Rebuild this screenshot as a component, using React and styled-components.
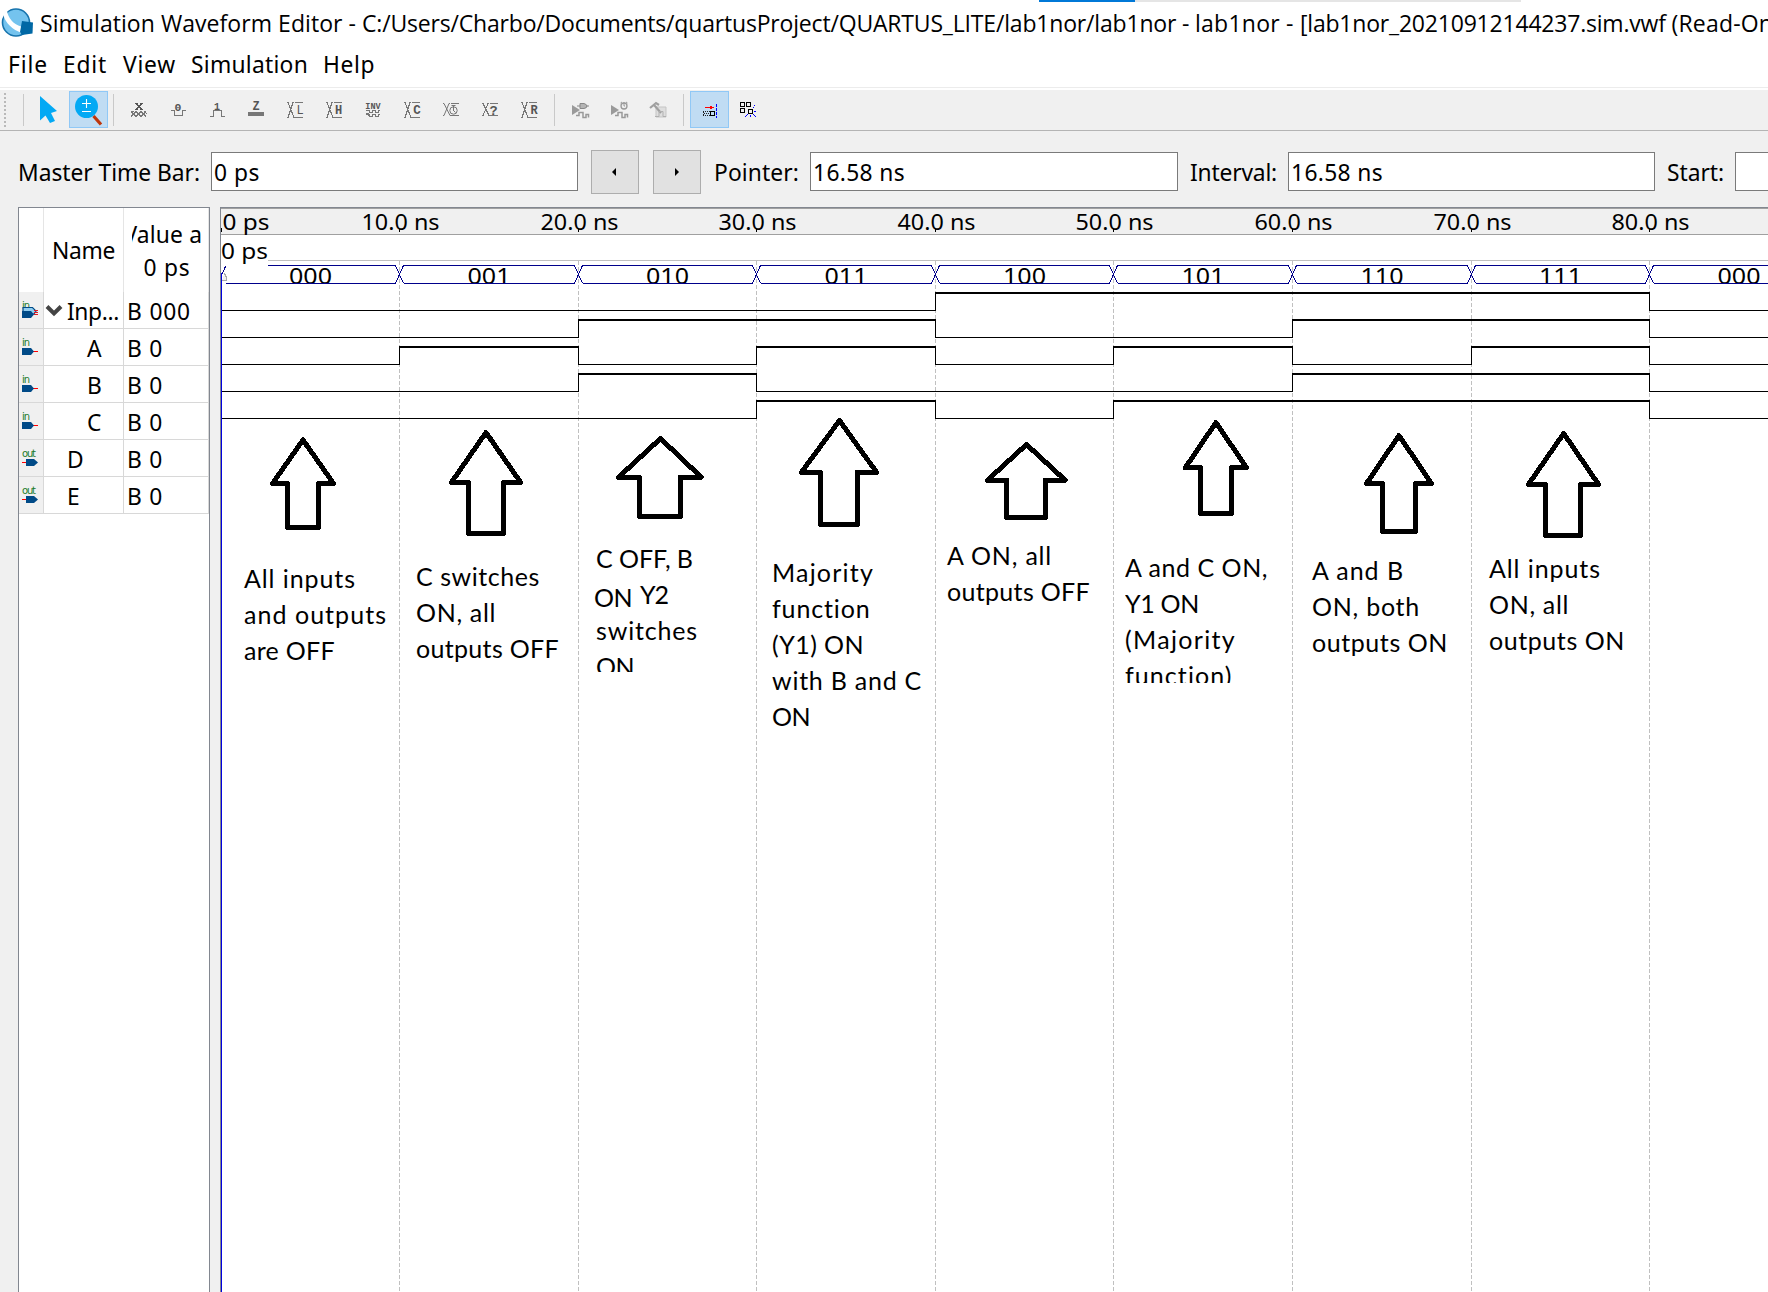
import React, { useLayoutEffect, useRef, useState } from 'react';
import styled, { createGlobalStyle } from 'styled-components';

const GlobalStyle = createGlobalStyle`
  * { box-sizing: border-box; }
  html, body, #root { margin: 0; padding: 0; height: 100%; }
  body { background: #f0f0f0; overflow: hidden; }
`;

const UI_FONT = '"Noto Sans", "Open Sans", sans-serif';

/* ---------- text set to a given measure ---------- */

const Run = styled.span`
  display: inline-block;
  justify-self: start;
  white-space: pre;
`;

function Fit({ width, children }) {
  const ref = useRef(null);
  const [spacing, setSpacing] = useState(0);
  useLayoutEffect(() => {
    const el = ref.current;
    el.style.letterSpacing = '0px';
    const natural = el.getBoundingClientRect().width;
    setSpacing((width - natural) / String(children).length);
    el.style.letterSpacing = `${(width - natural) / String(children).length}px`;
  }, [width, children]);
  return (
    <Run ref={ref} style={{ letterSpacing: `${spacing}px` }}>
      {children}
    </Run>
  );
}

/* ---------- window frame ---------- */

const Window = styled.div`
  width: 1768px;
  height: 1292px;
  display: flex;
  flex-direction: column;
  overflow: hidden;
  background: #f0f0f0;
  color: #000;
  font-family: ${UI_FONT};
  font-size: 22.8px;
`;

const TopStrip = styled.div`
  height: 2px;
  flex: none;
  display: flex;
  padding-left: 1039px;
  background: #fff;
`;
const StripPart = styled.div`
  width: ${(p) => p.$w}px;
  background: ${(p) => p.$color};
`;

const TitleBar = styled.header`
  height: 44px;
  flex: none;
  display: flex;
  align-items: center;
  padding: 0 0 1px 1px;
  background: #fff;
  white-space: pre;
  line-height: 43px;
  font-family: "Open Sans", "Noto Sans", sans-serif;
  font-size: 23px;
`;
const Logo = styled.svg`
  width: 34px;
  height: 32px;
  flex: none;
  margin-right: 5px;
`;

const MenuBar = styled.nav`
  height: 44px;
  flex: none;
  display: grid;
  grid-template-columns: 55px 60px 68px 132px 60px;
  padding-left: 8px;
  background: #fff;
  border-bottom: 2px solid #fff;
  box-shadow: inset 0 -1px #ececec;
  line-height: 37px;
`;

/* ---------- tool bar ---------- */

const ToolBar = styled.div`
  height: 41px;
  flex: none;
  display: flex;
  align-items: flex-start;
  padding: 1px 0 0 4px;
  border-bottom: 1px solid #b4b4b4;
`;
const Grip = styled.div`
  width: 2px;
  height: 34px;
  margin: 2px 17px 0 0;
  background: repeating-linear-gradient(#b9b9b9 0 2px, transparent 2px 4px);
`;
const Divider = styled.div`
  width: 1px;
  height: 32px;
  margin: 3px ${(p) => p.$after}px 0 ${(p) => p.$before || 0}px;
  background: #c9c9c9;
`;
const ToolButton = styled.button`
  width: 39px;
  height: 37px;
  margin: 0 ${(p) => p.$after || 0}px 0 0;
  padding: 0;
  display: block;
  border: 1px solid ${(p) => (p.$on ? '#90c8f6' : 'transparent')};
  background: ${(p) => (p.$on ? '#c0dcf3' : 'transparent')};
`;
const Glyph = styled.svg`
  display: block;
  width: 39px;
  height: 37px;
  margin: -1px;
  overflow: visible;
`;

const G = '#777';
const letterProps = {
  fill: '#555',
  fontFamily: '"Liberation Mono", monospace',
  fontWeight: 700,
  textAnchor: 'middle',
};

function CrossFrame({ small }) {
  const b = small ? 24.5 : 26.5;
  const t = small ? 12.5 : 11.5;
  return (
    <path
      d={`M12 ${t}h1l6 ${b - t}h1M19 ${t}h-1l-5 ${b - t}h-1M20 ${t}h8M20 ${b}h8`}
      stroke={G}
      fill="none"
    />
  );
}

const icons = {
  pointer: <path d="M13 5V29.500L18.500 24.500L23 32L28 30L24 22L30 20Z" fill="#03a9f4" />,
  zoom: (
    <>
      <path d="M24.500 25L32 33.500" stroke="#bf360c" strokeWidth="3.200" />
      <circle cx="17.500" cy="15.500" r="11.500" fill="#03a9f4" />
      <path d="M13 12.500h9M17.500 8v9M13 20.500h9" stroke="#fff" strokeWidth="1.100" />
    </>
  ),
  x: (
    <>
      <path d="M16 12.500h3M21 12.500h3M16 18.500h3M21 18.500h3M17.500 12.500L22.500 18.500M22.500 12.500L17.500 18.500" stroke="#555" strokeWidth="1.500" fill="none" />
      <path d="M12 20.500l5 5l5 -5l5 5M12 25.500l5 -5l5 5l5 -5M14.500 20l-2 2M25 20l3 3" stroke={G} fill="none" />
    </>
  ),
  zero: (
    <>
      <text x="20" y="20" fontSize="11.500" {...letterProps}>0</text>
      <path d="M13 19.500h3.500v5h8v-5H28" stroke={G} fill="none" />
    </>
  ),
  one: (
    <>
      <text x="20" y="18.500" fontSize="10" {...letterProps}>1</text>
      <path d="M13 25.500h3.500v-6h7.500v6h3.500" stroke={G} fill="none" />
    </>
  ),
  z: (
    <>
      <text x="20" y="19" fontSize="12" {...letterProps}>Z</text>
      <path d="M12 21h16v4H12z" fill={G} />
    </>
  ),
  l: <><CrossFrame /><text x="25" y="22.500" fontSize="12" {...letterProps} fontWeight="400">L</text></>,
  h: <><CrossFrame /><text x="24.500" y="22.500" fontSize="12" {...letterProps}>H</text></>,
  inv: (
    <>
      <text x="20" y="18" fontSize="8.500" {...letterProps}>INV</text>
      <path
        d="M13 19.500h3v2h3v-2h3v2h3v-2h2M13 22.500h2v2M13 23.500h3v2h3v-2h3v2h3v-2h2"
        stroke={G}
        fill="none"
      />
    </>
  ),
  c: <><CrossFrame /><text x="25" y="23" fontSize="12.500" {...letterProps}>C</text></>,
  clock: (
    <>
      <CrossFrame small />
      <circle cx="22.500" cy="19.500" r="3.700" fill="none" stroke={G} />
      <path d="M22.500 14v6M20.500 14.500h4M22.500 19.500l2 2" stroke={G} fill="none" />
    </>
  ),
  question: <><CrossFrame small /><text x="23.500" y="23.500" fontSize="13.500" {...letterProps}>?</text></>,
  r: <><CrossFrame /><text x="25" y="22.500" fontSize="12" {...letterProps}>R</text></>,
  run: (
    <>
      <path d="M11 14L19 19L11 24Z" fill="#9a9a9a" />
      <path d="M19 12.500h4q3 1 3 2.500q0 2 -3 2.500h-4zM16 15h3M25 15h3" fill="#b5b5b5" stroke="#888" />
      <path d="M15 24.500h3v-3h4v5h3v-3h2.500v3" fill="none" stroke="#999" strokeWidth="1.500" />
    </>
  ),
  runTimed: (
    <>
      <path d="M11 14L19 19L11 24Z" fill="#9a9a9a" />
      <circle cx="24" cy="15" r="3" fill="#eee" stroke="#999" strokeWidth="1.300" />
      <path d="M24 11v4h1M20.500 12l1.500 -1M27.500 12l-1.500 -1" stroke="#999" fill="none" />
      <path d="M15 24.500h3v-3h4v5h3v-3h2.500v3" fill="none" stroke="#999" strokeWidth="1.500" />
    </>
  ),
  generate: (
    <>
      <path d="M17 16h10v10H17z" fill="#dedede" stroke="#c5c5c5" />
      <path d="M11 17L17 12L20 14M15.500 14.500L22 22" fill="none" stroke="#a0a0a0" strokeWidth="2.200" />
      <path d="M16 25.500h4v-5h4v5h3" fill="none" stroke="#b0b0b0" />
    </>
  ),
  snap: (
    <>
      <path d="M15 16.500h6" stroke="#f00" />
      <path d="M20 14.500v4l3.500 -2z" fill="#f00" />
      <path d="M13 20.500h7M14 22.500h6M13 24.500h7M13.500 21v4" stroke="#222" strokeDasharray="1 1" />
      <path d="M20.500 20.500h4v4h-4z" fill="none" stroke="#000" />
      <path d="M26.500 13v14" stroke="#00f" strokeDasharray="3 1" />
    </>
  ),
  grid: (
    <>
      <path d="M11.500 11.500h4v4h-4zM17.500 11.500h4v4h-4zM11.500 17.500h4v4h-4zM19.500 18.500h4v4h-4z" fill="none" stroke="#000" strokeWidth="1.300" />
      <path d="M24 17l2 -2.500M25 20.500h3M24.500 23.500l2.500 2.500M21.500 24v3M18.500 23.500l-2 2.500" stroke="#00f" strokeDasharray="2 .6" fill="none" />
    </>
  ),
};

function Tool({ name, on, smooth, after }) {
  return (
    <ToolButton $on={on} $after={after}>
      <Glyph viewBox="0 0 39 37" shapeRendering={smooth ? 'auto' : 'crispEdges'}>
        {icons[name]}
      </Glyph>
    </ToolButton>
  );
}

/* ---------- time bar ---------- */

const TimeBar = styled.div`
  height: 76px;
  flex: none;
  display: flex;
  align-items: flex-start;
  padding: 19px 0 0 18px;
  width: 2200px;
`;
const FieldLabel = styled.label`
  width: ${(p) => p.$w}px;
  flex: none;
  line-height: 45px;
  white-space: nowrap;
`;
const Field = styled.div`
  width: ${(p) => p.$w}px;
  height: 39px;
  flex: none;
  margin: 2px ${(p) => p.$after}px 0 0;
  padding-left: 2px;
  border: 1px solid #7a7a7a;
  background: #fff;
  line-height: 39px;
`;
const StepButton = styled.button`
  width: 48px;
  height: 44px;
  flex: none;
  margin: 0 ${(p) => p.$after}px 0 0;
  padding: 0 2px 0 0;
  display: flex;
  align-items: center;
  justify-content: center;
  border: 1px solid #adadad;
  background: #e1e1e1;
`;

/* ---------- signal table ---------- */

const Main = styled.main`
  flex: 1;
  min-height: 0;
  display: flex;
  gap: 10px;
  padding-left: 18px;
`;
const SignalPanel = styled.section`
  width: 192px;
  flex: none;
  border: 1px solid #828790;
  border-bottom: 0;
  background: #fff;
`;
const columns = '25px 80px 1fr';
const HeadRow = styled.div`
  height: 84px;
  display: grid;
  grid-template-columns: ${columns};
`;
const HeadCell = styled.div`
  border-right: 1px solid #e5e5e5;
  display: flex;
  flex-direction: column;
  align-items: center;
  justify-content: center;
  overflow: hidden;
  line-height: 33px;
  padding: ${(p) => p.$pad || '0'};
`;
const Clipped = styled.div`
  width: 70px;
  display: flex;
  justify-content: center;
  overflow: hidden;
`;
const SignalRow = styled.div`
  height: 37px;
  display: grid;
  grid-template-columns: ${columns};
`;
const Cell = styled.div`
  border-right: 1px solid #d8d8d8;
  border-bottom: 1px solid #d8d8d8;
  background: ${(p) => (p.$gutter ? '#f0f0f0' : '#fff')};
  padding-left: ${(p) => p.$indent || 0}px;
  line-height: 39px;
  display: flex;
  white-space: nowrap;
  overflow: hidden;
`;
const PinSvg = styled.svg`
  width: 23px;
  height: 36px;
  display: block;
`;
const Chevron = styled.svg`
  width: 18px;
  height: 36px;
  margin: 0 4px 0 1px;
  flex: none;
`;

function Pin({ kind }) {
  const out = kind === 'out';
  return (
    <PinSvg viewBox="0 0 23 36">
      <text x="3" y="17" fontSize="10" textLength={out ? 14 : 8} fill="#1b7a2b" fontFamily="DejaVu Sans, sans-serif">
        {out ? 'out' : 'in'}
      </text>
      {kind === 'bus' && (
        <>
          <path d="M4 15.500h9.500l3.500 3.500l-2 3H4z" fill="#8fcdf0" stroke="#004a87" strokeWidth="1.200" />
          <path d="M15 18.500h4M15 20.500h4M15 22.500h4" stroke="#e01b24" />
        </>
      )}
      {kind !== 'bus' && <path d={out ? 'M3 22.500h5' : 'M13 22.500h6'} stroke="#f00" />}
      <path d={out ? 'M7 19h8l4 3.500l-4 3.500H7z' : 'M3 19h9l3 3.500l-3 3.500H3z'} fill="#004a87" />
    </PinSvg>
  );
}

const signals = [
  { kind: 'bus', name: 'Inp...', w: 52, value: 'B 000', vw: 64 },
  { kind: 'in', name: 'A', indent: 43, w: 16, value: 'B 0', vw: 36 },
  { kind: 'in', name: 'B', indent: 43, w: 16, value: 'B 0', vw: 36 },
  { kind: 'in', name: 'C', indent: 43, w: 16, value: 'B 0', vw: 36 },
  { kind: 'out', name: 'D', indent: 23, w: 17, value: 'B 0', vw: 36 },
  { kind: 'out', name: 'E', indent: 23, w: 14, value: 'B 0', vw: 36 },
];

/* ---------- waveform canvas ---------- */

const WavePanel = styled.section`
  position: relative;
  flex: 1;
  min-width: 0;
  overflow: hidden;
  background: #fff;
`;
const WaveSvg = styled.svg`
  display: block;
  width: 1548px;
  height: 1085px;
  font-family: ${UI_FONT};
  font-size: 22.4px;
`;

const marks = [221, 399, 578, 756, 935, 1113, 1292, 1471, 1649, 1828];
const busValues = ['000', '001', '010', '011', '100', '101', '110', '111', '000'];
const traces = ['000011110', '001100110', '010101010', '001000110', '000101110'];

function tracePath(bits, low) {
  const top = low - 18;
  let d = '';
  let edge = '';
  bits.split('').forEach((bit, i) => {
    const a = marks[i];
    const b = marks[i + 1];
    if (bit === '1') d += `M${a} ${top}H${b + 1}v2H${a}z`;
    else d += `M${a} ${low}H${b + 1}v1H${a}z`;
    if (i > 0 && bits[i - 1] !== bit) edge += `M${a} ${top}h1V${low + 1}h-1z`;
  });
  return d + edge;
}

const arrows = [
  [303, 440, 272.5, 333.5, 483.5, 287.5, 318.5, 527.5],
  [486, 432.5, 451.5, 520.5, 482.3, 468.5, 503.5, 533.5],
  [660.5, 438.5, 618.5, 701.3, 477.3, 639.5, 680.3, 516.5],
  [839.5, 420.5, 801.4, 876.6, 472.3, 820.3, 857.3, 524.5],
  [1026.5, 444.5, 987.3, 1065.3, 480.3, 1006.6, 1045.4, 517.5],
  [1216, 422.5, 1185.3, 1246.5, 467.7, 1200.5, 1231.3, 513.5],
  [1399, 435.5, 1366.5, 1431.5, 483.5, 1382.5, 1415.5, 531.5],
  [1563.7, 433.5, 1528.5, 1598.5, 484.3, 1545.5, 1580.5, 535.5],
];

function Waveforms() {
  return (
    <WaveSvg viewBox="220 207 1548 1085" shapeRendering="crispEdges">
      <rect x="220" y="207" width="1548" height="27" fill="#f0f0f0" />
      <rect x="220" y="207" width="1548" height="1" fill="#828790" />
      <rect x="220" y="208" width="1548" height="1" fill="#a0a0a0" />
      <rect x="220" y="234" width="1548" height="1" fill="#a0a0a0" />
      <rect x="268" y="260" width="1500" height="1" fill="#c0c0c0" />
      <text x="222.500" y="230" textLength="47" lengthAdjust="spacingAndGlyphs">0 ps</text>
      <rect x="221" y="228" width="1" height="4" />
      {marks.slice(1, 9).map((m, i) => (
        <g key={m}>
          <text x={m - 37.5} y="230" textLength="78" lengthAdjust="spacingAndGlyphs">{`${i + 1}0.0 ns`}</text>
          <rect x={m} y="228" width="1" height="4" />
          <line x1={m + 0.5} x2={m + 0.5} y1="261" y2="1292" stroke="#c0c0c0" strokeDasharray="4 2" />
        </g>
      ))}
      <text x="221" y="259" textLength="47" lengthAdjust="spacingAndGlyphs">0 ps</text>

      {busValues.map((v, i) => (
        <text key={i} x={(marks[i] + marks[i + 1]) / 2 - 21} y="284" textLength="43" lengthAdjust="spacingAndGlyphs">{v}</text>
      ))}
      <rect x="222" y="284" width="1546" height="6" fill="#fff" />
      {marks.slice(1, 9).map((m) => (
        <line key={m} x1={m + 0.5} x2={m + 0.5} y1="285" y2="291" stroke="#c0c0c0" strokeDasharray="4 2" />
      ))}
      {busValues.map((v, i) => (
        <path
          key={i}
          d={`M${i ? marks[i] + 4.5 : 268} 265.500H${marks[i + 1] - 3.5}M${marks[i] + 4.5} 283.500H${marks[i + 1] - 3.5}`}
          stroke="#00008b"
        />
      ))}
      {marks.slice(1, 9).map((m) => (
        <path key={m} d={`M${m - 3.5} 265.500L${m + 4.5} 283.500M${m + 4.5} 265.500L${m - 3.5} 283.500`} stroke="#00008b" />
      ))}
      <path d="M221.500 275L225.500 266.500" stroke="#00008b" />
      <path d="M222 280.500h4v-4l-1.500 -3" stroke="#a9a9a9" fill="#f0f0f0" />

      {traces.map((bits, i) => (
        <path key={i} d={tracePath(bits, 310 + 27 * i)} fill="#000" />
      ))}
      <rect x="220" y="207" width="1" height="1085" fill="#828790" />
      <rect x="221" y="273" width="1" height="1019" fill="#0000e0" />
      {arrows.map(([tx, ty, l, r, wy, bl, br, by]) => (
        <path
          key={tx}
          d={`M${tx} ${ty}L${r} ${wy}H${br}V${by}H${bl}V${wy}H${l}Z`}
          fill="none"
          stroke="#000"
          strokeWidth="5"
          strokeLinejoin="round"
        />
      ))}
    </WaveSvg>
  );
}

/* Notes are pinned freely on the canvas; x and y are the first baseline. */
const Note = styled.div`
  position: absolute;
  left: ${(p) => p.$x - 220}px;
  top: ${(p) => p.$y - 28 - 207}px;
  ${(p) => (p.$clip ? `height: ${p.$clip}px; overflow: hidden;` : '')}
  font-family: Lato, "Noto Sans", sans-serif;
  font-size: 25px;
  line-height: 36px;
`;
const Line = styled.div`
  height: 36px;
  white-space: nowrap;
`;

const notes = [
  { x: 244, y: 588, lines: [['All inputs', 112], ['and outputs', 143], ['are OFF', 91]] },
  { x: 416, y: 586, lines: [['C switches', 124], ['ON, all', 80], ['outputs OFF', 143]] },
  { x: 596, y: 568, lines: [['C OFF, B', 97]] },
  { x: 594, y: 607, lines: [['ON', 38]] },
  { x: 640, y: 604, lines: [['Y2', 28]] },
  { x: 596, y: 640, clip: 60, lines: [['switches', 102], ['ON', 38]] },
  { x: 772, y: 582, lines: [['Majority', 102], ['function', 99], ['(Y1) ON', 92], ['with B and C', 150], ['ON', 38]] },
  { x: 947, y: 565, lines: [['A ON, all', 105], ['outputs OFF', 143]] },
  { x: 1125, y: 577, clip: 134, lines: [['A and C ON,', 143], ['Y1 ON', 74], ['(Majority', 111], ['function)', 108]] },
  { x: 1312, y: 580, lines: [['A and B', 92], ['ON, both', 108], ['outputs ON', 136]] },
  { x: 1489, y: 578, lines: [['All inputs', 112], ['ON, all', 80], ['outputs ON', 136]] },
];

export default function App() {
  return (
    <>
      <GlobalStyle />
      <Window>
        <TopStrip>
          <StripPart $w={96} $color="#0078d7" />
          <StripPart $w={386} $color="#e5e5e5" />
        </TopStrip>
        <TitleBar>
          <Logo viewBox="1 7.500 34 32">
            <circle cx="16" cy="22" r="13.500" fill="#74c3ee" stroke="#1673ad" strokeWidth="1.600" />
            <path d="M3 14C6 23 12 29 22 32.500L21 26C14 24 8 18 7 10Z" fill="#fff" />
            <path d="M2 17C2 11 7 7 11 8L7 11C4 12 3 14 3 17Z" fill="#fff" />
            <path d="M22 20.500L33 22L32.500 33L22 34.500L20 31.500Z" fill="#0068a5" />
          </Logo>
          <Fit width={322}>{'Simulation Waveform Editor - '}</Fit>
          <Fit width={833}>{'C:/Users/Charbo/Documents/quartusProject/QUARTUS_LITE/lab1nor/lab1nor - '}</Fit>
          <Fit width={105}>{'lab1nor - '}</Fit>
          <Fit width={371.5}>{'[lab1nor_20210912144237.sim.vwf '}</Fit>
          <Fit width={134}>{'(Read-Only)]'}</Fit>
        </TitleBar>
        <MenuBar>
          <Fit width={40}>File</Fit>
          <Fit width={44}>Edit</Fit>
          <Fit width={53}>View</Fit>
          <Fit width={117}>Simulation</Fit>
          <Fit width={52}>Help</Fit>
        </MenuBar>
        <ToolBar>
          <Grip />
          <Divider $after={3} />
          <Tool name="pointer" smooth after={3} />
          <Tool name="zoom" on smooth />
          <Divider $before={5} $after={5} />
          {['x', 'zero', 'one', 'z', 'l', 'h', 'inv', 'c', 'clock', 'question', 'r'].map((n) => (
            <Tool key={n} name={n} smooth={n === 'clock'} />
          ))}
          <Divider $before={6} $after={6} />
          <Tool name="run" smooth />
          <Tool name="runTimed" smooth />
          <Tool name="generate" smooth />
          <Divider $before={5} $after={6} />
          <Tool name="snap" on />
          <Tool name="grid" />
        </ToolBar>
        <TimeBar>
          <FieldLabel $w={193}><Fit width={182}>Master Time Bar:</Fit></FieldLabel>
          <Field $w={367} $after={13}><Fit width={46}>0 ps</Fit></Field>
          <StepButton $after={14}>
            <svg width="6" height="10" viewBox="0 0 6 10"><path d="M5 1v8L1 5z" /></svg>
          </StepButton>
          <StepButton $after={13}>
            <svg width="6" height="10" viewBox="0 0 6 10"><path d="M2 1v8l4 -4z" /></svg>
          </StepButton>
          <FieldLabel $w={96}><Fit width={85}>Pointer:</Fit></FieldLabel>
          <Field $w={368} $after={12}><Fit width={92}>16.58 ns</Fit></Field>
          <FieldLabel $w={98}><Fit width={87}>Interval:</Fit></FieldLabel>
          <Field $w={367} $after={12}><Fit width={92}>16.58 ns</Fit></Field>
          <FieldLabel $w={68}><Fit width={57}>Start:</Fit></FieldLabel>
          <Field $w={367} $after={0} />
        </TimeBar>
        <Main>
          <SignalPanel>
            <HeadRow>
              <HeadCell />
              <HeadCell><Fit width={63}>Name</Fit></HeadCell>
              <HeadCell $pad="2px 0 0 2px">
                <Clipped><Fit width={87}>Value at</Fit></Clipped>
                <Fit width={47}>0 ps</Fit>
              </HeadCell>
            </HeadRow>
            {signals.map((s) => (
              <SignalRow key={s.name}>
                <Cell $gutter><Pin kind={s.kind} /></Cell>
                <Cell $indent={s.indent}>
                  {s.kind === 'bus' && (
                    <Chevron viewBox="0 0 18 36">
                      <path d="M2 14.500L9 21.500L16 14.500" fill="none" stroke="#444" strokeWidth="4" />
                    </Chevron>
                  )}
                  <Fit width={s.w}>{s.name}</Fit>
                </Cell>
                <Cell $indent={3}><Fit width={s.vw}>{s.value}</Fit></Cell>
              </SignalRow>
            ))}
          </SignalPanel>
          <WavePanel>
            <Waveforms />
            {notes.map((n) => (
              <Note key={`${n.x}-${n.y}`} $x={n.x} $y={n.y} $clip={n.clip}>
                {n.lines.map(([text, w]) => (
                  <Line key={text}><Fit width={w}>{text}</Fit></Line>
                ))}
              </Note>
            ))}
          </WavePanel>
        </Main>
      </Window>
    </>
  );
}
